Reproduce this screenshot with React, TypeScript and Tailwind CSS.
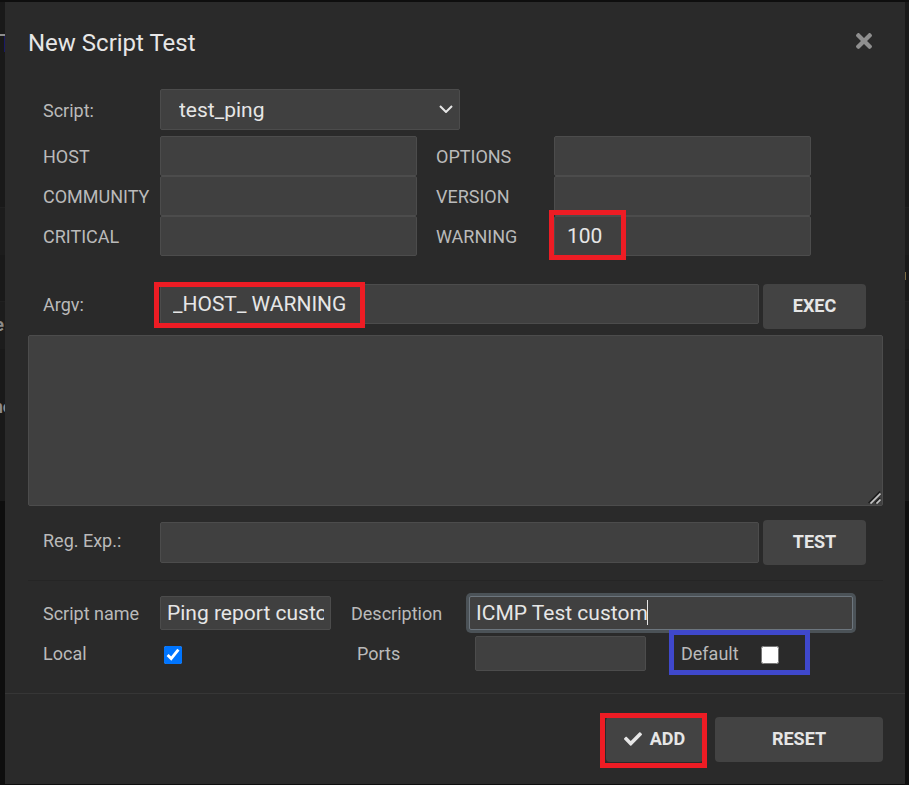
import type { ComponentProps } from "react";
import { FaCheck, FaTimes } from "react-icons/fa";

const fieldBase =
  "min-w-0 rounded-[2px] border border-[#4c4c4c] bg-[#404040] text-[21px] leading-6 text-[#e6e6e6] outline-none";

const params = [
  { name: "HOST", value: "" },
  { name: "OPTIONS", value: "" },
  { name: "COMMUNITY", value: "" },
  { name: "VERSION", value: "" },
  { name: "CRITICAL", value: "" },
  { name: "WARNING", value: "100", marked: true },
];

function Label({ className = "", ...props }: ComponentProps<"label">) {
  return (
    <label
      className={`shrink-0 whitespace-nowrap pt-0.5 text-lg leading-6 text-[#bababa] ${className}`}
      {...props}
    />
  );
}

function Button({ className = "", ...props }: ComponentProps<"button">) {
  return (
    <button
      type="button"
      className={`flex h-[45px] shrink-0 items-center justify-center gap-2 rounded-[4px] bg-[#434343] pb-0.5 text-lg font-bold text-[#e6e6e6] ${className}`}
      {...props}
    />
  );
}

function Marker({ className }: { className: string }) {
  return (
    <span
      aria-hidden="true"
      className={`pointer-events-none absolute border-[5px] ${className}`}
    />
  );
}

function Backdrop() {
  return (
    <div
      aria-hidden="true"
      className="absolute inset-0 overflow-hidden bg-[#0e0e0e] text-lg font-bold text-[#8c8c8c]"
    >
      <div className="mt-0.5 h-[205px] bg-[#191919]" />
      <div className="h-12 border-t border-[#202020] bg-[#1c1c1c]" />
      <div className="h-[46px] bg-[#191919]" />
      <div className="h-12 border-t border-[#202020] bg-[#1c1c1c]" />
      <div className="h-[152px] bg-[#191919]" />
      <span className="absolute left-0 top-[34px] h-0.5 w-[5px] bg-[#8c8c8c]" />
      <span className="absolute left-1 top-9 h-4 w-px bg-[#1a1a66]" />
      <span className="absolute right-[calc(100%-4px)] top-[311px]">e</span>
      <span className="absolute right-[calc(100%-13px)] top-[393px]">no</span>
      <span className="absolute right-[3px] top-[272px] h-2 w-px bg-[#7d6c45]" />
    </div>
  );
}

export default function App() {
  return (
    <div className="relative min-h-screen pb-px pl-[5px] pr-1 pt-0.5 font-[Roboto,sans-serif]">
      <Backdrop />
      <div role="dialog" aria-labelledby="title" className="relative bg-[#2a2a2a]">
        <header className="flex items-start justify-between pb-[30px] pl-[23px] pr-[33px] pt-[25px]">
          <h1 id="title" className="text-2xl leading-8 text-[#e6e6e6]">
            New Script Test
          </h1>
          <button
            type="button"
            aria-label="Close"
            className="flex h-7 items-center text-[#8f8f8f]"
          >
            <FaTimes className="h-6 w-4" />
          </button>
        </header>

        <form className="pl-[23px] pr-[22px]">
          <div className="flex items-center pl-[15px]">
            <Label htmlFor="script" className="w-[117px]">
              Script:
            </Label>
            <div className="relative w-[300px]">
              <select
                id="script"
                className={`${fieldBase} h-[41px] w-full appearance-none pl-[18px]`}
              >
                <option>test_ping</option>
              </select>
              <svg
                viewBox="0 0 14 8"
                className="pointer-events-none absolute right-[7px] top-4 h-2 w-3.5"
                fill="none"
                stroke="#e6e6e6"
                strokeWidth="2"
              >
                <path d="M1 1l6 6 6-6" />
              </svg>
            </div>
          </div>

          <div className="mt-1.5 grid grid-cols-[117px_1fr_137px_1fr] items-center pl-[15px] pr-[72px]">
            {params.map((param, i) => (
              <div key={param.name} className="contents">
                <Label
                  htmlFor={param.name}
                  className={i % 2 ? "pl-[19px]" : ""}
                >
                  {param.name}
                </Label>
                <div className="relative flex">
                  <input
                    id={param.name}
                    type="text"
                    defaultValue={param.value}
                    className={`${fieldBase} h-10 w-full px-3`}
                  />
                  {param.marked && (
                    <Marker className="-left-[5px] -top-1.5 h-[50px] w-[77px] border-[#ed1c24]" />
                  )}
                </div>
              </div>
            ))}
          </div>

          <div className="mt-7 flex items-start pl-[15px] pr-[17px]">
            <Label htmlFor="argv" className="mt-[7px] w-[117px]">
              Argv:
            </Label>
            <div className="relative mr-1 flex flex-1">
              <input
                id="argv"
                type="text"
                defaultValue="_HOST_ WARNING"
                className={`${fieldBase} h-10 w-full px-3`}
              />
              <Marker className="-left-1.5 -top-0.5 h-[46px] w-[211px] border-[#ed1c24]" />
            </div>
            <Button className="w-[103px]">EXEC</Button>
          </div>

          <div className="relative mt-1.5">
            <textarea
              aria-label="Output"
              className={`${fieldBase} block h-[171px] w-full resize-none p-3`}
            />
            <svg
              viewBox="0 0 13 13"
              className="pointer-events-none absolute bottom-0.5 right-0.5 size-[13px]"
              fill="none"
            >
              <path d="M0.5 12L12 0.5M7 12l5-5" stroke="#1c1c1c" strokeWidth="1.5" />
              <path d="M2.5 12.5l10-10M8.5 12.5l4-4" stroke="#c4c4c4" strokeWidth="1.7" />
            </svg>
          </div>

          <div className="mt-3.5 flex items-center pl-[15px] pr-[17px]">
            <Label htmlFor="regexp" className="w-[117px] pb-1.5">
              Reg. Exp.:
            </Label>
            <input
              id="regexp"
              type="text"
              className={`${fieldBase} mr-1 h-[41px] flex-1 px-3`}
            />
            <Button className="w-[103px]">TEST</Button>
          </div>

          <hr className="mt-[15px] border-[#252525]" />

          <div className="mt-[15px] flex items-center pl-[15px] pr-[30px]">
            <Label htmlFor="name" className="w-[117px]">
              Script name
            </Label>
            <input
              id="name"
              type="text"
              defaultValue="Ping report custom"
              className={`${fieldBase} mr-5 h-[34px] w-[171px] px-1.5`}
            />
            <Label htmlFor="description" className="w-[118px]">
              Description
            </Label>
            <div className="relative flex flex-1">
              <input
                id="description"
                type="text"
                defaultValue="ICMP Test custom"
                className="h-[34px] w-full min-w-0 rounded-[2px] border border-[#6c757d] bg-[#404040] px-1.5 text-[21px] leading-6 text-[#e6e6e6] outline-none ring-3 ring-[#4b5257]"
              />
              <span
                aria-hidden="true"
                className="absolute left-[178px] top-1 h-[25px] w-px bg-[#e6e6e6]"
              />
            </div>
          </div>

          <div className="mt-1.5 flex items-center pl-[15px]">
            <Label htmlFor="local" className="w-[121px] pb-0.5">
              Local
            </Label>
            <input id="local" type="checkbox" defaultChecked className="mt-0.5 size-[18px]" />
            <Label htmlFor="ports" className="ml-[175px] w-[118px] pb-0.5">
              Ports
            </Label>
            <input
              id="ports"
              type="text"
              className={`${fieldBase} h-[35px] w-[171px] px-1.5`}
            />
            <div className="relative ml-[23px] flex h-[35px] w-[141px] items-center pl-3">
              <Label htmlFor="default" className="w-20 pb-0.5">
                Default
              </Label>
              <input id="default" type="checkbox" className="mt-0.5 size-[18px]" />
              <Marker className="-top-1.5 left-0 h-[45px] w-[141px] border-[#3f48cc]" />
            </div>
          </div>
        </form>

        <footer className="mt-[22px] flex justify-end gap-3 border-t border-[#363636] pb-[22px] pr-[22px] pt-[23px]">
          <div className="relative">
            <Button className="w-[97px]">
              <FaCheck className="size-[18px]" />
              ADD
            </Button>
            <Marker className="-left-1.5 -top-1 h-[55px] w-[107px] border-[#ed1c24]" />
          </div>
          <Button className="w-[168px]">RESET</Button>
        </footer>
      </div>
    </div>
  );
}
